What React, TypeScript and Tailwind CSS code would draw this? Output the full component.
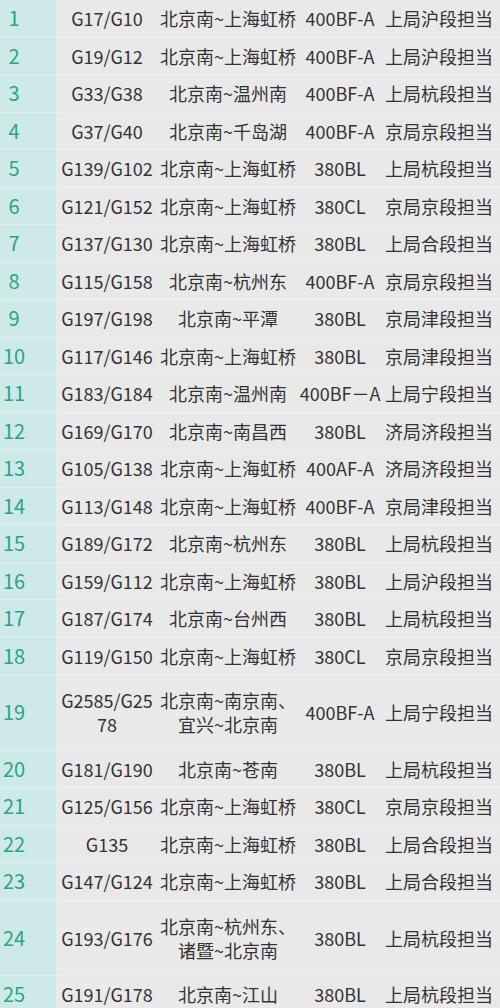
import React from 'react'

type Row = {
  no: number
  train: React.ReactNode
  route: React.ReactNode
  model: string
  duty: string
  tall?: boolean
}

const rows: Row[] = [
  { no: 1, train: 'G17/G10', route: '北京南~上海虹桥', model: '400BF-A', duty: '上局沪段担当' },
  { no: 2, train: 'G19/G12', route: '北京南~上海虹桥', model: '400BF-A', duty: '上局沪段担当' },
  { no: 3, train: 'G33/G38', route: '北京南~温州南', model: '400BF-A', duty: '上局杭段担当' },
  { no: 4, train: 'G37/G40', route: '北京南~千岛湖', model: '400BF-A', duty: '京局京段担当' },
  { no: 5, train: 'G139/G102', route: '北京南~上海虹桥', model: '380BL', duty: '上局杭段担当' },
  { no: 6, train: 'G121/G152', route: '北京南~上海虹桥', model: '380CL', duty: '京局京段担当' },
  { no: 7, train: 'G137/G130', route: '北京南~上海虹桥', model: '380BL', duty: '上局合段担当' },
  { no: 8, train: 'G115/G158', route: '北京南~杭州东', model: '400BF-A', duty: '京局京段担当' },
  { no: 9, train: 'G197/G198', route: '北京南~平潭', model: '380BL', duty: '京局津段担当' },
  { no: 10, train: 'G117/G146', route: '北京南~上海虹桥', model: '380BL', duty: '京局津段担当' },
  { no: 11, train: 'G183/G184', route: '北京南~温州南', model: '400BF－A', duty: '上局宁段担当' },
  { no: 12, train: 'G169/G170', route: '北京南~南昌西', model: '380BL', duty: '济局济段担当' },
  { no: 13, train: 'G105/G138', route: '北京南~上海虹桥', model: '400AF-A', duty: '济局济段担当' },
  { no: 14, train: 'G113/G148', route: '北京南~上海虹桥', model: '400BF-A', duty: '京局津段担当' },
  { no: 15, train: 'G189/G172', route: '北京南~杭州东', model: '380BL', duty: '上局杭段担当' },
  { no: 16, train: 'G159/G112', route: '北京南~上海虹桥', model: '380BL', duty: '上局沪段担当' },
  { no: 17, train: 'G187/G174', route: '北京南~台州西', model: '380BL', duty: '上局杭段担当' },
  { no: 18, train: 'G119/G150', route: '北京南~上海虹桥', model: '380CL', duty: '京局京段担当' },
  {
    no: 19,
    train: (
      <>
        G2585/G25
        <br />
        78
      </>
    ),
    route: (
      <>
        北京南~南京南、
        <br />
        宜兴~北京南
      </>
    ),
    model: '400BF-A',
    duty: '上局宁段担当',
    tall: true,
  },
  { no: 20, train: 'G181/G190', route: '北京南~苍南', model: '380BL', duty: '上局杭段担当' },
  { no: 21, train: 'G125/G156', route: '北京南~上海虹桥', model: '380CL', duty: '京局京段担当' },
  { no: 22, train: 'G135', route: '北京南~上海虹桥', model: '380BL', duty: '上局合段担当' },
  { no: 23, train: 'G147/G124', route: '北京南~上海虹桥', model: '380BL', duty: '上局合段担当' },
  {
    no: 24,
    train: 'G193/G176',
    route: (
      <>
        北京南~杭州东、
        <br />
        诸暨~北京南
      </>
    ),
    model: '380BL',
    duty: '上局杭段担当',
    tall: true,
  },
  { no: 25, train: 'G191/G178', route: '北京南~江山', model: '380BL', duty: '上局杭段担当' },
]

const cell = 'flex items-center justify-center text-center border-b border-[#eeeeee]'

export default function App() {
  return (
    <div
      className="w-[500px] h-[1008px] overflow-hidden bg-[#e9e9e9] text-[18px] leading-[24px] text-[#333333]"
      style={{ fontFamily: '"Noto Sans CJK SC", "Noto Sans", sans-serif' }}
    >
      {rows.map((r) => (
        <div
          key={r.no}
          className={`grid grid-cols-[57px_100px_142px_82px_119px] ${r.tall ? 'h-[75.5px]' : 'h-[37.5px]'}`}
        >
          <div className="flex items-center bg-[#cdeae9] border-b border-r border-[#dcf1f0]">
            <span className="w-[28px] text-center text-[20px] text-[#2aa386]">{r.no}</span>
          </div>
          <div className={cell}>{r.train}</div>
          <div className={cell}>{r.route}</div>
          <div className={cell}>{r.model}</div>
          <div className={`${cell} pr-[3px]`}>{r.duty}</div>
        </div>
      ))}
    </div>
  )
}
